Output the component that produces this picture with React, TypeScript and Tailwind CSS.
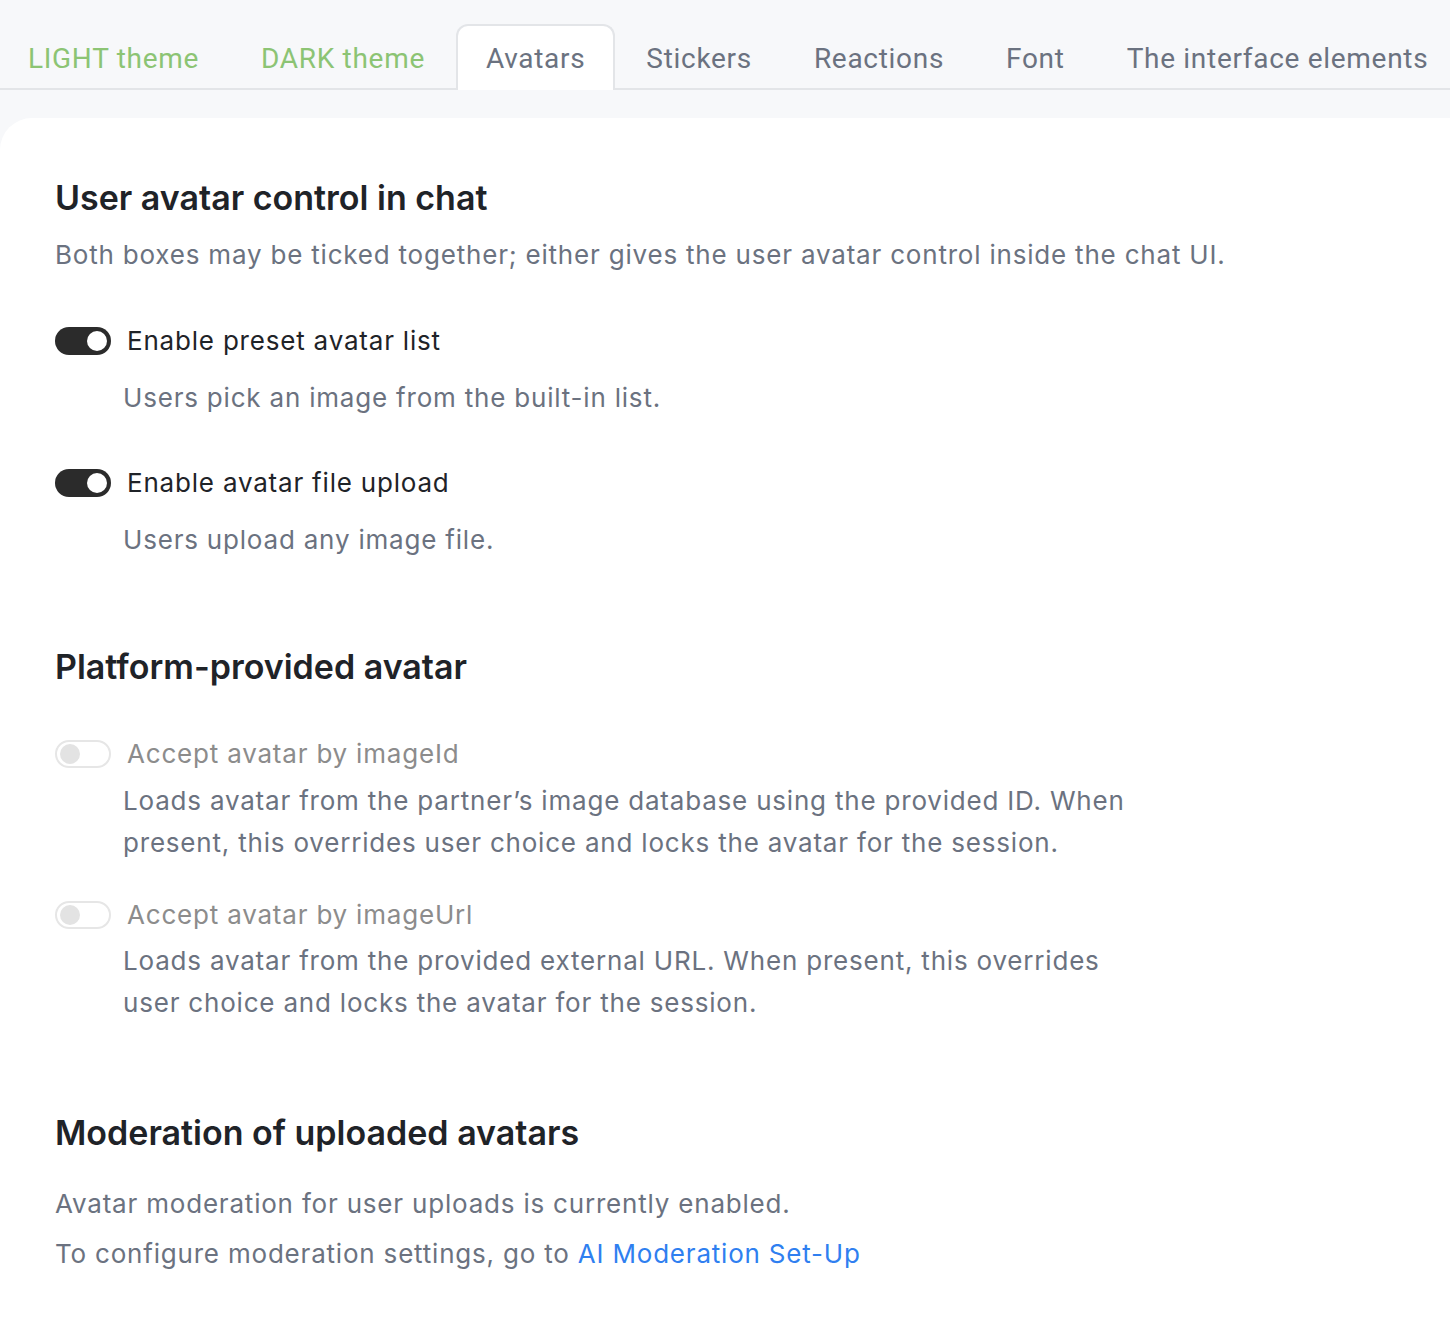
import React from "react";

const tabs = [
  { label: "LIGHT theme", tone: "green" },
  { label: "DARK theme", tone: "green" },
  { label: "Avatars", tone: "active" },
  { label: "Stickers", tone: "gray" },
  { label: "Reactions", tone: "gray" },
  { label: "Font", tone: "gray" },
  { label: "The interface elements", tone: "gray" },
];

function Toggle({ on }: { on: boolean }) {
  if (on) {
    return (
      <div className="relative w-[56px] h-[28px] rounded-full bg-[#2b2b2b] shrink-0">
        <div className="absolute right-[4px] top-[4px] w-[20px] h-[20px] rounded-full bg-white" />
      </div>
    );
  }
  return (
    <div className="relative w-[56px] h-[28px] rounded-full bg-white border-2 border-[#e6e6e6] shrink-0">
      <div className="absolute left-[3px] top-[2px] w-[20px] h-[20px] rounded-full bg-[#e3e3e3]" />
    </div>
  );
}

function Option({
  on,
  disabled,
  label,
  desc,
  descGap,
}: {
  on: boolean;
  disabled?: boolean;
  label: string;
  desc: string;
  descGap: string;
}) {
  return (
    <div>
      <div className="flex items-center gap-4 h-[36px]">
        <Toggle on={on} />
        <span
          className={`text-[26px] leading-[36px] tracking-[0.8px] ${disabled ? "text-[#8c8c8c]" : "text-[#1f2328]"}`}
        >
          {label}
        </span>
      </div>
      <p
        className={`${descGap} ml-[68px] max-w-[1022px] text-[26px] leading-[42px] tracking-[0.8px] text-[#6b7280]`}
      >
        {desc}
      </p>
    </div>
  );
}

export default function App() {
  return (
    <div
      className="min-h-[1318px] bg-[#f7f8fa] overflow-hidden"
      style={{ fontFamily: "Inter, 'Noto Sans', sans-serif" }}
    >
      {/* Tabs */}
      <div className="h-[90px] flex items-end border-b-2 border-[#e3e5e8]">
        <div className="flex items-end ml-[-3px] whitespace-nowrap">
          {tabs.map((t) => (
            <div
              key={t.label}
              className={`h-[66px] text-[28px] leading-[40px] tracking-[0.7px] ${
                t.tone === "active"
                  ? "bg-white border-2 border-b-0 border-[#e3e5e8] rounded-t-xl -mb-[2px] px-[28px] pt-[13px] text-[#6b7280]"
                  : t.tone === "green"
                    ? "px-[31px] pt-[17px] text-[#8cc474]"
                    : "px-[31px] pt-[17px] text-[#6b7280]"
              }`}
              style={{ fontFamily: "Roboto, 'Noto Sans', sans-serif" }}
            >
              {t.label}
            </div>
          ))}
        </div>
      </div>

      {/* Card */}
      <div className="mt-[28px] bg-white rounded-tl-[32px] pl-[55px] pt-[60px] pb-[60px] min-h-[1200px]">
        <h2 className="text-[34px] leading-[40px] font-semibold text-[#1f2328]">
          User avatar control in chat
        </h2>
        <p className="mt-[19px] text-[26px] leading-[36px] tracking-[0.8px] text-[#6b7280]">
          Both boxes may be ticked together; either gives the user avatar control inside the chat UI.
        </p>

        <div className="mt-[50px]">
          <Option
            on
            label="Enable preset avatar list"
            desc="Users pick an image from the built-in list."
            descGap="mt-[18px]"
          />
        </div>
        <div className="mt-[46px]">
          <Option
            on
            label="Enable avatar file upload"
            desc="Users upload any image file."
            descGap="mt-[18px]"
          />
        </div>

        <h2 className="mt-[86px] text-[34px] leading-[40px] font-semibold text-[#1f2328]">
          Platform-provided avatar
        </h2>
        <div className="mt-[49px]">
          <Option
            on={false}
            disabled
            label="Accept avatar by imageId"
            desc="Loads avatar from the partner’s image database using the provided ID. When present, this overrides user choice and locks the avatar for the session."
            descGap="mt-[8px]"
          />
        </div>
        <div className="mt-[33px]">
          <Option
            on={false}
            disabled
            label="Accept avatar by imageUrl"
            desc="Loads avatar from the provided external URL. When present, this overrides user choice and locks the avatar for the session."
            descGap="mt-[7px]"
          />
        </div>

        <h2 className="mt-[89px] text-[34px] leading-[40px] font-semibold text-[#1f2328]">
          Moderation of uploaded avatars
        </h2>
        <p className="mt-[33px] text-[26px] leading-[36px] tracking-[0.8px] text-[#6b7280]">
          Avatar moderation for user uploads is currently enabled.
        </p>
        <p className="mt-[14px] text-[26px] leading-[36px] tracking-[0.8px] text-[#6b7280]">
          To configure moderation settings, go to{" "}
          <a href="#" className="text-[#2f7ff0]">
            AI Moderation Set-Up
          </a>
        </p>
      </div>
    </div>
  );
}
